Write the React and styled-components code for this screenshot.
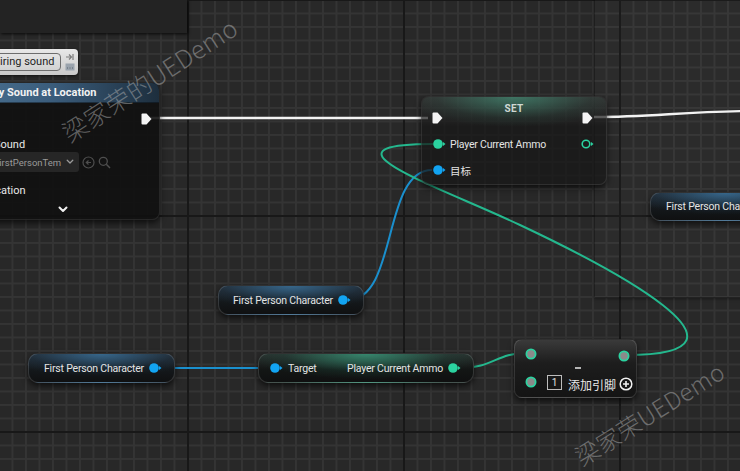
import React from 'react';
import styled, { createGlobalStyle } from 'styled-components';

const Global = createGlobalStyle`
  html, body { margin: 0; padding: 0; background: #272727; }
  body { width: 740px; height: 471px; overflow: hidden; font-family: Roboto, "Noto Sans CJK SC", sans-serif; }
`;

const GREEN = '#2bd3a0';
const BLUE = '#12a4f2';

const Canvas = styled.div`
  position: relative;
  width: 740px;
  height: 471px;
  overflow: hidden;
  background-color: #282828;
  background-image:
    linear-gradient(to right, #181818 0 2px, transparent 2px),
    linear-gradient(to bottom, #181818 0 2px, transparent 2px),
    linear-gradient(to right, #343434 0 2px, transparent 2px),
    linear-gradient(to bottom, #343434 0 2px, transparent 2px);
  background-size: 216px 216px, 216px 216px, 13.5px 13.5px, 13.5px 13.5px;
  background-position: 187px 0, 0 215px, 187px 0, 0 215px;
`;

const TopBox = styled.div`
  position: absolute;
  left: 0;
  top: 0;
  width: 187px;
  height: 33px;
  background: #232323;
  box-shadow: 1px 1px 3px rgba(0, 0, 0, 0.8);
`;

const SidePanel = styled.div`
  position: absolute;
  left: 595px;
  top: -10px;
  width: 160px;
  height: 307px;
  background: rgba(255, 255, 255, 0.015);
  box-shadow: -1px 2px 3px rgba(0, 0, 0, 0.4);
`;

const Wires = styled.svg`
  position: absolute;
  left: 0;
  top: 0;
  z-index: 1;
`;

const Bubble = styled.div`
  position: absolute;
  left: -20px;
  top: 49px;
  width: 98px;
  height: 26px;
  border-radius: 4px;
  background: linear-gradient(to bottom, #e8e8e8, #c9c9c9);
  box-shadow: 0 1px 3px rgba(0, 0, 0, 0.6);
  display: flex;
  align-items: center;
  padding: 0 3px 0 4px;
  box-sizing: border-box;
  gap: 4px;
  z-index: 3;
`;

const BubbleText = styled.div`
  width: 77px;
  height: 18px;
  box-sizing: border-box;
  border: 1px solid #6d6d6d;
  border-radius: 4px;
  background: linear-gradient(to bottom, #e4e4e4, #d2d2d2);
  font-size: 11px;
  color: #1e1e1e;
  line-height: 16px;
  padding-left: 9px;
  white-space: nowrap;
`;

const BubbleIcons = styled.div`
  display: flex;
  flex-direction: column;
  gap: 2px;
  align-items: center;
`;

const NodeBox = styled.div`
  position: absolute;
  left: ${(p) => p.$x}px;
  top: ${(p) => p.$y}px;
  width: ${(p) => p.$w}px;
  height: ${(p) => p.$h}px;
  box-sizing: border-box;
  border-radius: ${(p) => p.$r || 8}px;
  background: ${(p) => p.$bg || 'rgba(14,14,14,0.86)'};
  border: 1px solid rgba(255, 255, 255, 0.09);
  box-shadow: 0 3px 6px rgba(0, 0, 0, 0.65);
  overflow: hidden;
  z-index: 2;
  display: flex;
  flex-direction: column;
  color: #e4e4e4;
  font-size: 10.5px;
  letter-spacing: -0.2px;
`;

const PlayHeader = styled.div`
  height: 20px;
  flex: none;
  background: linear-gradient(to right, #4a7192 0%, #3b5d7c 45%, #1d2e3d 100%);
  border-bottom: 1px solid rgba(0, 0, 0, 0.4);
  box-sizing: border-box;
  padding-left: 20px;
  font-weight: 700;
  font-size: 11px;
  letter-spacing: 0;
  line-height: 19px;
  color: #f2f2f2;
  white-space: nowrap;
`;

const ExecRow = styled.div`
  height: ${(p) => p.$h}px;
  flex: none;
  display: flex;
  justify-content: ${(p) => p.$justify || 'space-between'};
  align-items: center;
  padding: 0 ${(p) => p.$pr || 12}px 0 ${(p) => p.$pl || 11}px;
  position: relative;
`;

const Label = styled.div`
  padding-left: ${(p) => p.$indent}px;
  margin-top: ${(p) => p.$mt || 0}px;
  line-height: 14px;
  font-size: 11px;
  letter-spacing: 0;
  white-space: nowrap;
  color: #e8e8e8;
`;

const DropRow = styled.div`
  display: flex;
  align-items: center;
  height: 20px;
  padding-left: 26px;
  gap: 3px;
`;

const Dropdown = styled.div`
  width: 90px;
  height: 20px;
  box-sizing: border-box;
  background: #262626;
  border-radius: 3px;
  display: flex;
  align-items: center;
  justify-content: space-between;
  padding: 0 5px 0 5px;
  font-size: 9.5px;
  letter-spacing: 0;
  color: #9a9a9a;
  white-space: nowrap;
  overflow: hidden;
`;

const ChevronRow = styled.div`
  display: flex;
  justify-content: center;
  margin-top: 8px;
  padding-left: 4px;
`;

const SetTitle = styled.div`
  position: absolute;
  left: 0;
  right: 0;
  top: 6px;
  text-align: center;
  font-size: 10px;
  font-weight: 700;
  color: #cfd8d4;
  line-height: 12px;
  letter-spacing: 0.3px;
`;

const SetGlow = styled.div`
  position: absolute;
  left: 0;
  top: 0;
  right: 0;
  height: 30px;
  background: radial-gradient(ellipse 60% 100% at 50% 0%, rgba(72, 170, 138, 0.55), rgba(50, 110, 90, 0.15) 70%, transparent 100%),
    linear-gradient(to bottom, rgba(255, 255, 255, 0.1), transparent);
`;

const Spacer = styled.div`
  height: ${(p) => p.$h}px;
  flex: none;
`;

const PinRow = styled.div`
  height: 26px;
  flex: none;
  display: flex;
  align-items: center;
  justify-content: space-between;
  padding: 0 ${(p) => p.$pr || 12}px 0 ${(p) => p.$pl || 11}px;
  white-space: nowrap;
`;

const PinLabel = styled.div`
  display: flex;
  align-items: center;
  gap: ${(p) => p.$gap || 4}px;
`;

const CjkText = styled.span`
  font-family: "Noto Sans CJK SC", sans-serif;
  letter-spacing: 0;
`;

const Lift = styled.div`
  display: flex;
  margin-top: 10px;
`;

const Pill = styled(NodeBox)`
  border-radius: 10px;
  flex-direction: row;
  align-items: center;
  justify-content: space-between;
  padding: 0 ${(p) => p.$pr}px 0 ${(p) => p.$pl}px;
  background: ${(p) =>
    p.$green
      ? 'radial-gradient(ellipse 55% 90% at 50% 0%, rgba(60,170,135,0.7), rgba(30,80,65,0.25) 70%, transparent 100%), linear-gradient(to bottom, #2a3230 0%, #131615 55%, #0f1010 100%)'
      : 'radial-gradient(ellipse 70% 80% at 50% 0%, rgba(60,120,165,0.75), rgba(30,55,75,0.3) 70%, transparent 100%), linear-gradient(to bottom, #26303a 0%, #14181b 55%, #0f1011 100%)'};
  border: 1px solid rgba(255, 255, 255, 0.14);
  white-space: nowrap;
`;

const MinusNode = styled(NodeBox)`
  background: linear-gradient(to bottom, #3a3a3a 0%, #1d1d1d 40%, #141414 100%);
  border: 1px solid rgba(255, 255, 255, 0.12);
`;

const MinusGrid = styled.div`
  display: grid;
  grid-template-columns: 32px 65px 24px;
  grid-template-rows: 28px 28px;
  height: 100%;
  align-items: stretch;
`;

const Cell = styled.div`
  display: flex;
  justify-content: ${(p) => p.$j || 'center'};
  align-items: ${(p) => p.$a || 'center'};
  gap: 6px;
  padding-top: ${(p) => p.$pt || 0}px;
  padding-left: ${(p) => p.$pl || 0}px;
  white-space: nowrap;
`;

const MinusSign = styled.div`
  width: 6px;
  height: 2px;
  background: #b5b5b5;
  margin-bottom: -1px;
  margin-right: 3px;
`;

const IndexBox = styled.div`
  flex: none;
  width: 15px;
  height: 15px;
  box-sizing: border-box;
  border: 1px solid #bdbdbd;
  font-size: 10px;
  line-height: 13px;
  text-align: center;
  color: #e0e0e0;
  margin-top: -4px;
`;

const AddPin = styled.div`
  font-size: 12px;
  color: #e8e8e8;
  letter-spacing: 0;
  white-space: nowrap;
  font-family: "Noto Sans CJK SC", sans-serif;
`;

const WatermarkAnchor = styled.div`
  position: absolute;
  left: ${(p) => p.$x}px;
  top: ${(p) => p.$y}px;
  width: 0;
  height: 0;
  z-index: 6;
  pointer-events: none;
`;

const WatermarkText = styled.div`
  position: absolute;
  left: 0;
  top: 0;
  transform: translate(-50%, -50%) rotate(${(p) => p.$angle}deg);
  white-space: nowrap;
  font-family: "Noto Sans CJK SC", sans-serif;
  font-size: ${(p) => p.$size}px;
  font-weight: 300;
  color: rgba(175, 175, 175, 0.5);
  letter-spacing: 0.3px;
`;

const ExecPin = () => (
  <svg width="11" height="12" viewBox="0 0 11 12">
    <path d="M1.5 0.5 H5.5 L10.5 6 L5.5 11.5 H1.5 Q0.5 11.5 0.5 10.5 V1.5 Q0.5 0.5 1.5 0.5Z" fill="#f4f4f4" />
  </svg>
);

const DataPin = ({ color, hollow }) => (
  <svg width="13" height="10" viewBox="0 0 13 10">
    {hollow ? (
      <circle cx="5" cy="5" r="3.8" fill="none" stroke={color} strokeWidth="1.6" />
    ) : (
      <circle cx="5" cy="5" r="4.8" fill={color} />
    )}
    <path d="M10 3 L12.5 5 L10 7Z" fill={color} />
  </svg>
);

const RingPin = () => (
  <svg width="12" height="12" viewBox="0 0 12 12">
    <circle cx="6" cy="6" r="4.6" fill="#8a8a8a" stroke={GREEN} strokeWidth="1.8" />
  </svg>
);

const PlusIcon = () => (
  <svg width="14" height="14" viewBox="0 0 14 14">
    <circle cx="7" cy="7" r="5.8" fill="none" stroke="#f0f0f0" strokeWidth="1.5" />
    <path d="M7 4 V10 M4 7 H10" stroke="#f0f0f0" strokeWidth="1.6" />
  </svg>
);

const Chevron = ({ size = 10, color = '#f0f0f0', w = 2 }) => (
  <svg width={size} height={size * 0.7} viewBox="0 0 10 7">
    <path d="M1.5 1.5 L5 5 L8.5 1.5" fill="none" stroke={color} strokeWidth={w} strokeLinecap="round" strokeLinejoin="round" />
  </svg>
);

const UseIcon = () => (
  <svg width="13" height="13" viewBox="0 0 13 13">
    <circle cx="6.5" cy="6.5" r="5.5" fill="none" stroke="#4e4e4e" strokeWidth="1.2" />
    <path d="M9 6.5 H4.5 M6.5 4.5 L4.3 6.5 L6.5 8.5" fill="none" stroke="#4e4e4e" strokeWidth="1.2" />
  </svg>
);

const SearchIcon = () => (
  <svg width="13" height="13" viewBox="0 0 13 13">
    <circle cx="5.3" cy="5.3" r="4" fill="none" stroke="#4e4e4e" strokeWidth="1.3" />
    <path d="M8.3 8.3 L12 12" stroke="#4e4e4e" strokeWidth="1.5" />
  </svg>
);

const BubblePinIcon = () => (
  <svg width="10" height="8" viewBox="0 0 10 8">
    <path d="M1 4 H6 M4 1.5 L6.5 4 L4 6.5 M8 1 V7" fill="none" stroke="#7d7d7d" strokeWidth="1.2" />
  </svg>
);

const BubbleBoxIcon = () => (
  <svg width="10" height="8" viewBox="0 0 10 8">
    <rect x="0.5" y="0.5" width="9" height="7" fill="#9aa3ad" />
    <path d="M2 5 H3 M4.5 5 H5.5 M7 5 H8" stroke="#56606a" strokeWidth="1" />
  </svg>
);

export default function App() {
  return (
    <>
      <Global />
      <Canvas>
        <TopBox />
        <SidePanel />

        <Wires width="740" height="471" viewBox="0 0 740 471">
          <path d="M150 118 L428 118" stroke="#f2f2f2" strokeWidth="2.4" fill="none" />
          <path d="M594 117 C 650 117, 680 112, 745 111" stroke="#f2f2f2" strokeWidth="2.4" fill="none" />
          <path d="M158 368 L270 368" stroke="#1a8fcd" strokeWidth="2" fill="none" />
          <path d="M348 300 C 398 300, 382 170, 432 170" stroke="#1a8fcd" strokeWidth="2" fill="none" />
          <path d="M459 368 C 495 368, 495 353, 527 353" stroke="#24b88e" strokeWidth="2" fill="none" />
          <path
            d="M626 355 C 780 355, 605 265, 520 225 C 435 185, 310 144, 433 144"
            stroke="#24b88e"
            strokeWidth="2"
            fill="none"
          />
        </Wires>

        <Bubble>
          <BubbleText>Firing sound</BubbleText>
          <BubbleIcons>
            <BubblePinIcon />
            <BubbleBoxIcon />
          </BubbleIcons>
        </Bubble>

        <NodeBox $x={-38} $y={82} $w={198} $h={138} $bg="rgba(16,16,16,0.9)">
          <PlayHeader>Play Sound at Location</PlayHeader>
          <ExecRow $h={32} $justify="flex-end" $pr={7}>
            <ExecPin />
          </ExecRow>
          <Label $indent={31} $mt={3}>Sound</Label>
          <DropRow>
            <Dropdown>
              <span>FirstPersonTem</span>
              <Chevron size={8} color="#9a9a9a" w={1.6} />
            </Dropdown>
            <UseIcon />
            <SearchIcon />
          </DropRow>
          <Label $indent={20} $mt={12}>Location</Label>
          <ChevronRow>
            <Chevron size={10} />
          </ChevronRow>
        </NodeBox>

        <NodeBox $x={421} $y={96} $w={186} $h={89} $bg="rgba(22,22,22,0.72)">
          <SetGlow />
          <SetTitle>SET</SetTitle>
          <ExecRow $h={32} $pl={10} $pr={13}>
            <Lift><ExecPin /></Lift>
            <Lift><ExecPin /></Lift>
          </ExecRow>
          <Spacer $h={2} />
          <PinRow $pl={11} $pr={12}>
            <PinLabel>
              <DataPin color={GREEN} />
              <span>Player Current Ammo</span>
            </PinLabel>
            <DataPin color={GREEN} hollow />
          </PinRow>
          <PinRow $pl={11}>
            <PinLabel>
              <DataPin color={BLUE} />
              <CjkText>目标</CjkText>
            </PinLabel>
          </PinRow>
        </NodeBox>

        <Pill $x={650} $y={192} $w={150} $h={29} $pl={15} $pr={14}>
          <span>First Person Character</span>
          <DataPin color={BLUE} />
        </Pill>

        <Pill $x={218} $y={285} $w={146} $h={30} $pl={14} $pr={12}>
          <span>First Person Character</span>
          <DataPin color={BLUE} />
        </Pill>

        <Pill $x={28} $y={353} $w={147} $h={30} $pl={15} $pr={12}>
          <span>First Person Character</span>
          <DataPin color={BLUE} />
        </Pill>

        <Pill $x={258} $y={353} $w={216} $h={30} $pl={11} $pr={12} $green>
          <PinLabel $gap={5}>
            <DataPin color={BLUE} />
            <span>Target</span>
          </PinLabel>
          <PinLabel $gap={5}>
            <span>Player Current Ammo</span>
            <DataPin color={GREEN} />
          </PinLabel>
        </Pill>

        <MinusNode $x={514} $y={339} $w={123} $h={59}>
          <MinusGrid>
            <Cell><RingPin /></Cell>
            <Cell $a="flex-end"><MinusSign /></Cell>
            <Cell $pt={3}><RingPin /></Cell>
            <Cell><RingPin /></Cell>
            <Cell $j="flex-start" $pt={4}>
              <IndexBox>1</IndexBox>
              <AddPin>添加引脚</AddPin>
            </Cell>
            <Cell $j="flex-start" $pt={4} $pl={7}><PlusIcon /></Cell>
          </MinusGrid>
        </MinusNode>

        <WatermarkAnchor $x={149} $y={79}>
          <WatermarkText $angle={-33} $size={25}>梁家荣的UEDemo</WatermarkText>
        </WatermarkAnchor>
        <WatermarkAnchor $x={649} $y={413}>
          <WatermarkText $angle={-32} $size={24}>梁家荣UEDemo</WatermarkText>
        </WatermarkAnchor>
      </Canvas>
    </>
  );
}
